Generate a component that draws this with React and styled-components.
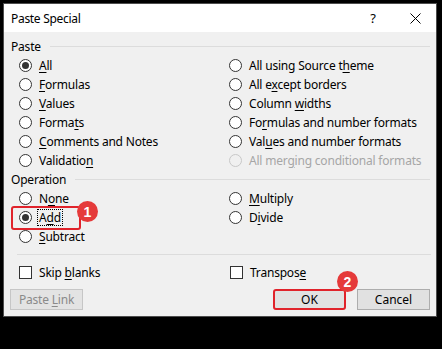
import React from 'react';
import styled, { createGlobalStyle } from 'styled-components';

const GlobalStyle = createGlobalStyle`
  body {
    margin: 0;
    background: #000;
    font-family: "Noto Sans", "Segoe UI", sans-serif;
  }
`;

const Dialog = styled.div`
  margin: 3px 0 0 3px;
  width: 432px;
  border: 1px solid #4d4d4d;
  background: #f0f0f0;
  font-size: 12px;
  color: #000;
`;

const TitleBar = styled.div`
  display: flex;
  align-items: center;
  height: 28px;
  background: #fff;
  padding-left: 7px;
`;

const Title = styled.div`
  flex: 1;
  font-size: 12px;
  letter-spacing: -0.3px;
`;

const TitleButton = styled.div`
  width: 42px;
  height: 28px;
  display: flex;
  align-items: center;
  justify-content: center;
  font-size: 13px;
`;

const Body = styled.div`
  padding: 6px 6px 6px 7px;
`;

const GroupHeader = styled.div`
  display: flex;
  align-items: center;
  gap: 9px;
  height: 16px;
  margin-top: ${p => p.$top || 0}px;
  letter-spacing: -0.2px;
`;

const Rule = styled.div`
  flex: 1;
  height: 1px;
  background: #dcdcdc;
`;

const Separator = styled.div`
  height: 1px;
  background: #dcdcdc;
  margin: 8px -1px 0 6px;
`;

const OptionGrid = styled.div`
  display: grid;
  grid-template-columns: 210px 1fr;
  grid-auto-rows: 19px;
  padding-left: 8px;
  margin-top: ${p => p.$top || 0}px;
`;

const Option = styled.label`
  position: relative;
  display: flex;
  align-items: center;
  gap: 7px;
  color: ${p => (p.$disabled ? '#a6a6a6' : '#000')};
  white-space: nowrap;
`;

const Radio = styled.span`
  box-sizing: border-box;
  width: 13px;
  height: 13px;
  border-radius: 50%;
  border: 1px solid ${p => (p.$disabled ? '#c8c8c8' : '#333')};
  background: ${p => (p.$disabled ? '#f0f0f0' : '#fff')};
  display: flex;
  align-items: center;
  justify-content: center;
  flex-shrink: 0;

  &::after {
    content: '';
    display: ${p => (p.$checked ? 'block' : 'none')};
    width: 7px;
    height: 7px;
    border-radius: 50%;
    background: #333;
  }
`;

const Checkbox = styled.span`
  box-sizing: border-box;
  width: 13px;
  height: 13px;
  border: 1px solid #333;
  background: #fff;
  flex-shrink: 0;
  margin-left: ${p => p.$shift || 0}px;
`;

const Text = styled.span`
  letter-spacing: -0.2px;
`;

const Key = styled.span`
  text-decoration: underline;
  text-underline-offset: 2px;
`;

const Focus = styled.span`
  outline: 1px dotted #000;
  outline-offset: 0;
  padding: 0 1px;
  margin-left: -1px;
  line-height: 15px;
`;

const ChecksRow = styled.div`
  display: grid;
  grid-template-columns: 210px 1fr;
  height: 19px;
  padding-left: 8px;
  margin-top: 8px;
`;

const ButtonRow = styled.div`
  display: flex;
  gap: 11px;
  margin-top: 7px;
`;

const Button = styled.div`
  position: relative;
  box-sizing: border-box;
  width: 73px;
  height: 21px;
  display: flex;
  align-items: center;
  justify-content: center;
  background: ${p => (p.$disabled ? '#e3e3e3' : '#e1e1e1')};
  border: ${p => (p.$highlight ? '2px solid #e0232b' : `1px solid ${p.$disabled ? '#c6c6c6' : '#adadad'}`)};
  border-radius: ${p => (p.$highlight ? '3px' : '0')};
  color: ${p => (p.$disabled ? '#8a8a8a' : '#000')};
  margin-left: ${p => (p.$push ? 'auto' : p.$left || 0)};
`;

const HighlightBox = styled.span`
  position: absolute;
  left: -8px;
  top: -2px;
  width: 70px;
  height: 24px;
  box-sizing: border-box;
  border: 2px solid #e0232b;
  border-radius: 3px;
  pointer-events: none;
`;

const Badge = styled.span`
  position: absolute;
  left: ${p => p.$x}px;
  top: ${p => p.$y}px;
  width: 21px;
  height: 21px;
  border-radius: 50%;
  background: #e53a3a;
  color: #fff;
  font-family: "Liberation Sans", Arial, sans-serif;
  font-weight: bold;
  font-size: 14px;
  display: flex;
  align-items: center;
  justify-content: center;
  z-index: 2;
`;

function Label({ text, k }) {
  if (k === undefined) return <Text>{text}</Text>;
  return (
    <Text>
      {text.slice(0, k)}
      <Key>{text[k]}</Key>
      {text.slice(k + 1)}
    </Text>
  );
}

const pasteOptions = [
  { text: 'All', k: 0, checked: true },
  { text: 'All using Source theme', k: 18 },
  { text: 'Formulas', k: 0 },
  { text: 'All except borders', k: 5 },
  { text: 'Values', k: 0 },
  { text: 'Column widths', k: 7 },
  { text: 'Formats', k: 5 },
  { text: 'Formulas and number formats', k: 2 },
  { text: 'Comments and Notes', k: 0 },
  { text: 'Values and number formats', k: 3 },
  { text: 'Validation', k: 9 },
  { text: 'All merging conditional formats', k: 7, disabled: true },
];

const operationOptions = [
  { text: 'None', k: 1 },
  { text: 'Multiply', k: 0 },
  { text: 'Add', k: 1, checked: true, focus: true },
  { text: 'Divide', k: 1 },
  { text: 'Subtract', k: 0 },
];

function RadioOption({ o }) {
  return (
    <Option $disabled={o.disabled}>
      <Radio $checked={o.checked} $disabled={o.disabled} />
      {o.focus ? (
        <Focus><Label text={o.text} k={o.k} /></Focus>
      ) : (
        <Label text={o.text} k={o.k} />
      )}
      {o.focus && (
        <>
          <HighlightBox />
          <Badge $x={58} $y={-7}>1</Badge>
        </>
      )}
    </Option>
  );
}

export default function App() {
  return (
    <>
      <GlobalStyle />
      <Dialog>
        <TitleBar>
          <Title>Paste Special</Title>
          <TitleButton>?</TitleButton>
          <TitleButton>
            <svg width="11" height="11" viewBox="0 0 11 11">
              <path d="M0.5 0.5 L10.5 10.5 M10.5 0.5 L0.5 10.5" stroke="#000" strokeWidth="1" fill="none" />
            </svg>
          </TitleButton>
        </TitleBar>
        <Body>
          <GroupHeader>
            Paste
            <Rule />
          </GroupHeader>
          <OptionGrid $top={2}>
            {pasteOptions.map(o => <RadioOption key={o.text} o={o} />)}
          </OptionGrid>
          <GroupHeader $top={1}>
            Operation
            <Rule />
          </GroupHeader>
          <OptionGrid $top={2}>
            {operationOptions.map(o => <RadioOption key={o.text} o={o} />)}
          </OptionGrid>
          <Separator />
          <ChecksRow>
            <Option>
              <Checkbox />
              <Label text="Skip blanks" k={5} />
            </Option>
            <Option>
              <Checkbox $shift={1} />
              <Label text="Transpose" k={8} />
            </Option>
          </ChecksRow>
          <ButtonRow>
            <Button $disabled $left="-1px"><Label text="Paste Link" k={6} /></Button>
            <Button $push $highlight>
              OK
              <Badge $x={62} $y={-20}>2</Badge>
            </Button>
            <Button>Cancel</Button>
          </ButtonRow>
        </Body>
      </Dialog>
    </>
  );
}
